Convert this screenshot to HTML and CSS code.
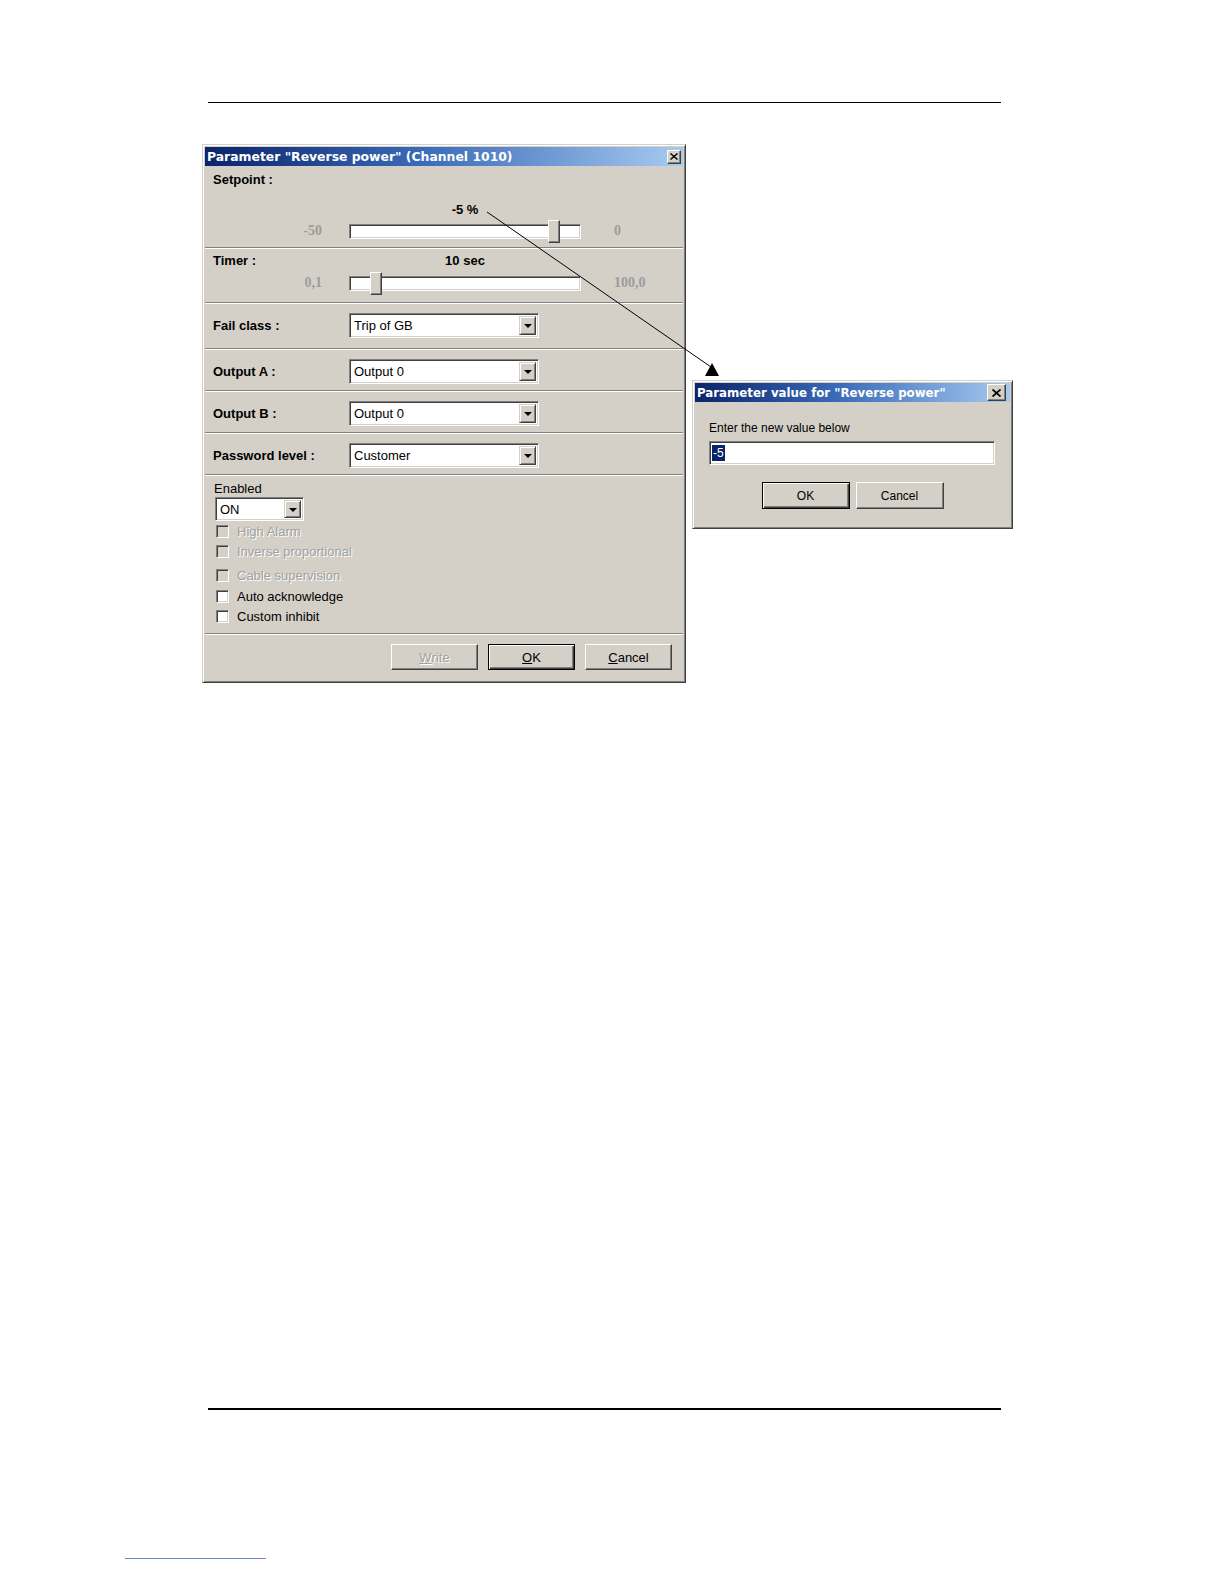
FILE: index.html
```html
<!DOCTYPE html>
<html>
<head>
<meta charset="utf-8">
<link rel="stylesheet" href="styles.css">
</head>
<body>
<div class="page">
  <div class="rule-top"></div>
  <div class="figure">
    <div class="dlg main-dlg">
      <div class="titlebar">
        <span class="title-text">Parameter "Reverse power" (Channel 1010)</span>
        <span class="xbtn xbtn-small"><svg viewBox="0 0 8 7" width="8" height="7"><path d="M0.5 0.5 L7.5 6.5 M7.5 0.5 L0.5 6.5" stroke="#000" stroke-width="1.4"/></svg></span>
      </div>
      <div class="sec sec-setpoint">
        <div class="blabel">Setpoint :</div>
        <div class="val-row"><span class="val">-5 %</span></div>
        <div class="slider-row">
          <span class="rmin">-50</span>
          <div class="track"><div class="thumb thumb-sp"></div></div>
          <span class="rmax">0</span>
        </div>
      </div>
      <div class="sec sec-timer">
        <div class="timer-head">
          <span class="blabel tlabel">Timer :</span>
          <span class="val">10 sec</span>
        </div>
        <div class="slider-row">
          <span class="rmin">0,1</span>
          <div class="track"><div class="thumb thumb-tm"></div></div>
          <span class="rmax">100,0</span>
        </div>
      </div>
      <div class="sec sec-combo sec-fail">
        <span class="blabel clabel">Fail class :</span>
        <div class="combo"><span class="combo-text">Trip of GB</span><span class="combo-btn"><i class="tri"></i></span></div>
      </div>
      <div class="sec sec-combo">
        <span class="blabel clabel">Output A :</span>
        <div class="combo"><span class="combo-text">Output 0</span><span class="combo-btn"><i class="tri"></i></span></div>
      </div>
      <div class="sec sec-combo">
        <span class="blabel clabel">Output B :</span>
        <div class="combo"><span class="combo-text">Output 0</span><span class="combo-btn"><i class="tri"></i></span></div>
      </div>
      <div class="sec sec-combo">
        <span class="blabel clabel">Password level :</span>
        <div class="combo"><span class="combo-text">Customer</span><span class="combo-btn"><i class="tri"></i></span></div>
      </div>
      <div class="sec sec-opts">
        <div class="en-label">Enabled</div>
        <div class="combo combo-small"><span class="combo-text">ON</span><span class="combo-btn"><i class="tri"></i></span></div>
        <div class="chk-row disabled"><span class="cbox"></span><span>High Alarm</span></div>
        <div class="chk-row disabled"><span class="cbox"></span><span>Inverse proportional</span></div>
        <div class="chk-row disabled gap-row"><span class="cbox"></span><span>Cable supervision</span></div>
        <div class="chk-row gap-row1"><span class="cbox"></span><span>Auto acknowledge</span></div>
        <div class="chk-row"><span class="cbox"></span><span>Custom inhibit</span></div>
      </div>
      <div class="sec sec-btns">
        <span class="btn btn-disabled"><u>W</u>rite</span>
        <span class="btn btn-default"><u>O</u>K</span>
        <span class="btn"><u>C</u>ancel</span>
      </div>
    </div>

    <div class="dlg value-dlg">
      <div class="titlebar">
        <span class="title-text">Parameter value for "Reverse power"</span>
        <span class="xbtn xbtn-big"><svg viewBox="0 0 9 8" width="9" height="8"><path d="M0.5 0.5 L8.5 7.5 M8.5 0.5 L0.5 7.5" stroke="#000" stroke-width="1.7"/></svg></span>
      </div>
      <div class="value-body">
        <div class="prompt">Enter the new value below</div>
        <div class="vinput"><span class="sel">-5</span></div>
        <div class="vbtns">
          <span class="btn btn2 btn-default">OK</span>
          <span class="btn btn2">Cancel</span>
        </div>
      </div>
    </div>
  </div>
  <div class="rule-bottom"></div>
  <div class="link-line"></div>

  <svg class="overlay" width="1224" height="1584" viewBox="0 0 1224 1584">
    <line x1="487" y1="212" x2="711" y2="367" stroke="#000" stroke-width="1"/>
    <polygon points="712,363 705,376 719,376" fill="#000"/>
  </svg>
</div>
</body>
</html>
```

FILE: styles.css
```css
* { box-sizing: border-box; }

body {
  margin: 0;
  background: #ffffff;
  font-family: "Liberation Sans", Arial, sans-serif;
  font-size: 13px;
  color: #000;
}

.page {
  position: relative;
  width: 1224px;
  height: 1584px;
  padding-top: 102px;
}

.rule-top {
  margin-left: 208px;
  width: 793px;
  height: 1px;
  background: #000;
}

.figure {
  display: flex;
  align-items: flex-start;
  gap: 6px;
  margin-top: 41px;
  margin-left: 202px;
}

/* ---------- Windows classic dialog frame ---------- */
.dlg {
  background: #d4d0c8;
  border: 1px solid;
  border-color: #d4d0c8 #404040 #404040 #d4d0c8;
  box-shadow: inset 1px 1px #ffffff, inset -1px -1px #808080;
  padding: 2px;
  display: flex;
  flex-direction: column;
}

.main-dlg {
  width: 484px;
  height: 539px;
}

.value-dlg {
  width: 321px;
  height: 149px;
  margin-top: 236px;
}

.titlebar {
  height: 19px;
  flex: none;
  background: linear-gradient(to right, #0a246a 0%, #3a6ab8 45%, #a6caf0 100%);
  display: flex;
  align-items: center;
  justify-content: space-between;
  padding: 0 2px 0 2px;
}

.title-text {
  color: #ffffff;
  font-family: "DejaVu Sans", Verdana, sans-serif;
  font-weight: bold;
  font-size: 12.4px;
  white-space: nowrap;
}

.value-dlg .title-text {
  font-size: 11.8px;
}

.xbtn {
  display: flex;
  align-items: center;
  justify-content: center;
  background: #d4d0c8;
  border: 1px solid;
  border-color: #ffffff #404040 #404040 #ffffff;
  box-shadow: inset -1px -1px #808080;
}

.xbtn-small {
  width: 14px;
  height: 14px;
}

.xbtn-big {
  width: 19px;
  height: 17px;
  margin-right: 2px;
}

/* ---------- sections ---------- */
.sec {
  flex: none;
  border-top: 1px solid #ffffff;
  border-bottom: 1px solid #808080;
}

.sec-setpoint {
  height: 82px;
  border-top: none;
  padding-top: 6px;
}

.sec-timer {
  height: 55px;
  padding-top: 4px;
}

.blabel {
  font-weight: bold;
  font-size: 13px;
  line-height: 16px;
  padding-left: 8px;
  white-space: nowrap;
}

.val-row {
  margin-top: 14px;
  height: 16px;
  line-height: 16px;
  padding-left: 144px;
  width: 376px;
  text-align: center;
}

.val {
  font-weight: bold;
  font-size: 13px;
}

.timer-head {
  display: flex;
  height: 16px;
  line-height: 16px;
}

.tlabel {
  width: 144px;
}

.timer-head .val {
  width: 232px;
  text-align: center;
}

.slider-row {
  display: flex;
  height: 24px;
  margin-top: 1px;
  align-items: flex-start;
}

.sec-timer .slider-row {
  margin-top: 2px;
}

.rmin,
.rmax {
  font-family: "Liberation Serif", "Times New Roman", serif;
  font-weight: bold;
  font-size: 14px;
  color: #9c9c9c;
  line-height: 24px;
}

.rmin {
  width: 117px;
  text-align: right;
  margin-right: 27px;
}

.rmax {
  margin-left: 33px;
}

.track {
  position: relative;
  width: 232px;
  height: 15px;
  margin-top: 5px;
  background: #ffffff;
  border: 1px solid;
  border-color: #808080 #ffffff #ffffff #808080;
  box-shadow: inset 1px 1px #404040, inset -1px -1px #d4d0c8;
}

.thumb {
  position: absolute;
  top: -5px;
  width: 12px;
  height: 23px;
  background: #d4d0c8;
  border: 1px solid;
  border-color: #ffffff #404040 #404040 #ffffff;
  box-shadow: inset -1px -1px #808080;
}

.thumb-sp { left: 198px; }
.thumb-tm { left: 20px; }

/* combos */
.sec-combo {
  height: 42px;
  padding-top: 9px;
  display: flex;
  align-items: flex-start;
}

.sec-fail {
  height: 46px;
}

.clabel {
  width: 144px;
  line-height: 25px;
}

.combo {
  width: 190px;
  height: 25px;
  background: #ffffff;
  border: 1px solid;
  border-color: #808080 #ffffff #ffffff #808080;
  box-shadow: inset 1px 1px #404040, inset -1px -1px #d4d0c8;
  display: flex;
  align-items: center;
  justify-content: space-between;
  padding: 2px;
}

.combo-text {
  font-size: 13px;
  padding-left: 2px;
  line-height: 19px;
}

.combo-btn {
  width: 17px;
  height: 19px;
  background: #d4d0c8;
  border: 1px solid;
  border-color: #d4d0c8 #404040 #404040 #d4d0c8;
  box-shadow: inset 1px 1px #ffffff, inset -1px -1px #808080;
  display: flex;
  align-items: center;
  justify-content: center;
}

.tri {
  display: block;
  width: 0;
  height: 0;
  border-left: 4px solid transparent;
  border-right: 4px solid transparent;
  border-top: 4px solid #000;
  margin-top: 1px;
}

/* options */
.sec-opts {
  height: 159px;
  padding-top: 5px;
  padding-left: 9px;
}

.en-label {
  font-size: 13px;
  line-height: 16px;
}

.combo-small {
  width: 89px;
  height: 24px;
  margin-left: 1px;
}

.combo-small .combo-btn {
  height: 18px;
}

.chk-row {
  display: flex;
  align-items: center;
  height: 20px;
  padding-left: 2px;
  font-size: 13px;
  white-space: nowrap;
}

.gap-row { margin-top: 4px; }
.gap-row1 { margin-top: 1px; }

.cbox {
  width: 13px;
  height: 13px;
  margin-right: 8px;
  background: #ffffff;
  border: 1px solid;
  border-color: #808080 #ffffff #ffffff #808080;
  box-shadow: inset 1px 1px #404040, inset -1px -1px #d4d0c8;
  flex: none;
}

.chk-row.disabled {
  color: #a0a0a0;
  text-shadow: 1px 1px 0 #ffffff;
}

.chk-row.disabled .cbox {
  background: #d4d0c8;
}

/* buttons */
.sec-btns {
  height: 46px;
  border-bottom: none;
  padding-top: 9px;
  padding-right: 11px;
  display: flex;
  justify-content: flex-end;
  gap: 10px;
}

.btn {
  width: 87px;
  height: 26px;
  display: flex;
  align-items: center;
  justify-content: center;
  background: #d4d0c8;
  border: 1px solid;
  border-color: #ffffff #404040 #404040 #ffffff;
  box-shadow: inset -1px -1px #808080;
  font-size: 13px;
}

.btn u {
  text-decoration: underline;
}

.btn-default {
  border: 1px solid #000;
  box-shadow: inset 1px 1px #ffffff, inset -1px -1px #404040, inset -2px -2px #808080;
}

.btn-disabled {
  color: #a0a0a0;
  text-shadow: 1px 1px 0 #ffffff;
}

/* value dialog body */
.value-body {
  padding: 18px 0 0 14px;
}

.prompt {
  font-size: 12px;
  line-height: 16px;
}

.vinput {
  margin-top: 5px;
  width: 286px;
  height: 24px;
  background: #ffffff;
  border: 1px solid;
  border-color: #808080 #ffffff #ffffff #808080;
  box-shadow: inset 1px 1px #404040, inset -1px -1px #d4d0c8;
  display: flex;
  align-items: center;
  padding-left: 2px;
}

.sel {
  background: #0a246a;
  color: #ffffff;
  font-size: 12px;
  line-height: 16px;
  padding: 0 1px;
}

.vbtns {
  margin-top: 17px;
  margin-left: -14px;
  display: flex;
  justify-content: center;
  gap: 6px;
  width: 315px;
}

.btn2 {
  width: 88px;
  height: 27px;
  font-size: 12px;
}

/* footer rules */
.rule-bottom {
  margin-top: 725px;
  margin-left: 208px;
  width: 793px;
  height: 2px;
  background: #000;
}

.link-line {
  margin-top: 148px;
  margin-left: 125px;
  width: 141px;
  height: 1px;
  background: #6f86d6;
}

.overlay {
  position: absolute;
  left: 0;
  top: 0;
  pointer-events: none;
}
```
